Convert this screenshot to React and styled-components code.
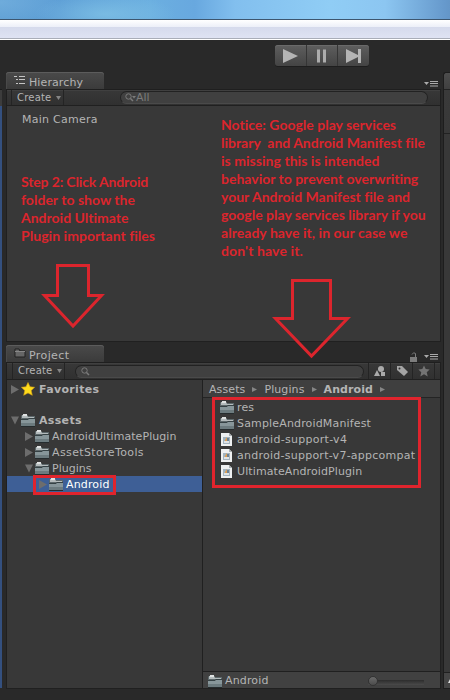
import React from "react";
import styled, { createGlobalStyle } from "styled-components";

const Global = createGlobalStyle`
  *{box-sizing:border-box}
  body{margin:0;background:#292929;overflow:hidden}
`;
const ui = `"DejaVu Sans", Verdana, sans-serif`;

const Page = styled.div`
  position:relative;width:450px;height:700px;overflow:hidden;display:flex;flex-direction:column;
  background:#292929;color:#b4b4b4;font:11px/16px ${ui};
`;
const Sky = styled.div`
  height:19px;flex:none;
  background:
    radial-gradient(ellipse 60px 24px at 0 2px, rgba(140,195,235,.35), transparent),
    radial-gradient(ellipse 70px 20px at 105px 14px, rgba(135,200,232,.6), transparent),
    linear-gradient(90deg,#5f9fd3 0,#5e9fd6 60px,#6bafe0 150px,#68a8df 195px,#82bfee 235px,#90cdf5 330px,#8cc6f1 385px,#6699cc 445px,#6496c8 450px);
`;
const Frame = styled.div`
  height:21px;flex:none;border-top:1px solid #3d566f;border-bottom:1px solid #fff;
  background:linear-gradient(#fff 0,#eceff8 7px,#d5daec 7px,#dfe3f3 18px,#a9adb8 18px);
`;
const Toolbar = styled.div`
  height:32px;flex:none;padding:5px 0 0 275px;
`;
const PlayGroup = styled.div`
  display:flex;width:94px;height:21px;border-radius:3px;overflow:hidden;
  background:linear-gradient(#5e5e5e,#444);box-shadow:inset 0 1px #6a6a6a,0 1px #1e1e1e;
`;
const PlayButton = styled.div`
  flex:1;display:flex;align-items:center;justify-content:center;
  & + &{border-left:1px solid #353535}
`;
const Workspace = styled.div`
  flex:1;min-height:0;display:flex;
`;
const LeftEdge = styled.div`
  width:2px;flex:none;margin:17px 4px 12px 0;background:linear-gradient(#3c3c3c 16px,#34507f 16px);
  border-top:1px solid #1c1c1c;
`;
const Column = styled.div`
  width:435px;flex:none;display:flex;flex-direction:column;gap:3px;
`;
const RightEdge = styled.div`
  flex:1;margin:0 0 11px 2px;border:1px solid #1d1d1d;border-right:0;border-radius:3px 0 0 0;
  background:linear-gradient(#4d4d4d 0,#404040 16px,#222 16px,#222 17px,#3a3a3a 17px,#383838 60px,#222 60px,#222 61px,#383838 61px);
  display:flex;flex-direction:column;justify-content:flex-end;
`;
const EdgeHeader = styled.div`
  height:16px;border-top:1px solid #202020;background:#454545;
  display:flex;justify-content:flex-end;align-items:center;
`;
const Panel = styled.section`
  height:${p => p.$height}px;flex:none;display:flex;flex-direction:column;
`;
const TabBar = styled.div`
  height:17px;flex:none;display:flex;justify-content:space-between;align-items:flex-end;
`;
const Tab = styled.div`
  width:98px;height:17px;padding:3px 0 0 8px;display:flex;gap:3px;border-radius:3px 3px 0 0;line-height:15px;
  background:linear-gradient(#4a4a4a,#3b3b3b);box-shadow:inset 0 1px #5c5c5c,inset 1px 0 #494949;
`;
const TabTools = styled.div`
  display:flex;align-items:center;gap:6px;height:10px;padding-right:3px;
`;
const Controls = styled.div`
  height:${p => p.$height}px;flex:none;display:flex;align-items:center;border:1px solid #1f1f1f;
  border-bottom-color:#202020;background:linear-gradient(#383838,#303030);box-shadow:inset 0 1px #404040;
  padding-left:${p => p.$indent}px;
`;
const Create = styled.div`
  width:53px;height:100%;display:flex;align-items:center;gap:5px;padding-left:5px;font-size:10px;letter-spacing:.2px;
  border:solid #242424;border-width:0 1px;
`;
const Search = styled.div`
  height:13px;width:${p => p.$width}px;margin-left:${p => p.$offset}px;border-radius:7px;
  border:1px solid #222;border-bottom-color:#4a4a4a;background:#404040;color:#7b7b7b;
  display:flex;align-items:center;padding-left:${p => p.$pad}px;
`;
const Filter = styled.div`
  width:22px;height:100%;border-left:1px solid #242424;display:flex;align-items:center;justify-content:center;
`;
const FilterGroup = styled.div`
  display:flex;height:100%;margin-left:4px;border-right:1px solid #242424;
`;
const Body = styled.div`
  flex:1;min-height:0;background:#383838;border:solid #202020;border-width:0 1px 1px;display:flex;
`;
const HierarchyItem = styled.div`
  padding:6px 0 0 15px;letter-spacing:.25px;
`;
const Tree = styled.div`
  width:196px;flex:none;border-right:1px solid #202020;padding-top:1px;
`;
const Row = styled.div`
  height:16px;display:flex;align-items:center;padding-left:${p => p.$indent}px;
  font-weight:${p => p.$bold ? 700 : 400};
  margin-bottom:${p => p.$gap || 0}px;
  color:${p => p.$selected ? "#fff" : "#b4b4b4"};
  background:${p => p.$selected ? "#3e5f96" : "transparent"};
`;
const Label = styled.span`
  white-space:pre;letter-spacing:${p => p.$spacing || 0}px;margin-left:${p => p.$left ?? 4}px;
  ${Row} &{line-height:18px;padding-top:1px}
`;
const Files = styled.div`
  flex:1;display:flex;flex-direction:column;
`;
const Crumbs = styled.div`
  height:18px;flex:none;display:flex;align-items:center;gap:7px;padding:2px 0 0 6px;
  background:#3f3f3f;border-bottom:1px solid #242424;letter-spacing:.1px;
`;
const FileList = styled.div`flex:1;padding-top:1px;`;
const Status = styled.div`
  height:17px;flex:none;display:flex;align-items:center;padding:2px 0 0 5px;background:#414141;border-top:1px solid #202020;
`;
const Slider = styled.div`
  width:56px;height:10px;margin-left:99px;display:flex;align-items:center;
  background:linear-gradient(#2d2d2d,#4a4a4a) 0 4px/56px 5px no-repeat;
`;
const Knob = styled.div`
  width:10px;height:10px;border-radius:50%;background:linear-gradient(#6a6a6a,#4c4c4c);border:1px solid #333;
`;
const Overlay = styled.div`position:absolute;inset:0;pointer-events:none;`;
const Note = styled.div`
  position:absolute;left:${p => p.$x}px;top:${p => p.$y}px;white-space:pre;
  font:700 14px/18px Lato, sans-serif;color:#dc252d;font-variant-ligatures:none;
`;
const NoteLine = styled.div`letter-spacing:${p => p.$spacing}px;`;
const Arrow = styled.svg`position:absolute;left:${p => p.$x}px;top:${p => p.$y}px;`;
const Highlight = styled.div`
  position:absolute;left:${p => p.$x}px;top:${p => p.$y}px;width:${p => p.$w}px;height:${p => p.$h}px;border:3px solid #e0242d;
`;
const FoldSlot = styled.span`
  width:10px;flex:none;display:flex;
`;

const Folder = () => (
  <svg width="14" height="13" viewBox="0 0 14 13">
    <path d="M0 12V2L1 1H6L7 2H14V12Z" fill="#5d686b" />
    <path d="M1 1H6L7 3H13V4H1Z" fill="#b4bbbc" />
    <path d="M2 0H6V2H2Z" fill="#dfe2e2" />
    <path d="M0 5H7L8 4H14V5H8L7 6H0Z" fill="#354144" />
    <path d="M0 6H7L8 5H14V9H0Z" fill="#87969a" />
    <path d="M0 9H14V12H0Z" fill="#6c7b7f" />
    <path d="M0 12H14V13H0Z" fill="#252c2e" />
  </svg>
);
const FileIcon = () => (
  <svg width="14" height="13" viewBox="0 0 14 13">
    <path d="M1 0H9L12 3V13H1Z" fill="#eef0f1" />
    <path d="M9 0V3H12" fill="#a9afb2" />
    <path d="M3 4H10V11H3Z" fill="#a3b4c0" />
    <path d="M4 8H9V10H4Z" fill="#e1e4e5" />
    <path d="M5 7L7 4V8H5Z" fill="#df9f51" /><path d="M7 5H9V8H7Z" fill="#6d8294" />
  </svg>
);
const Fold = ({ open }) => (
  <FoldSlot>
    <svg width="8" height="9" viewBox="0 0 8 9">
      <path d={open ? "M0 .5H8L4 8.5Z" : "M0 0L8 4.5L0 9Z"} fill="#6d6d6d" />
    </svg>
  </FoldSlot>
);
const Down = () => <svg width="5" height="4"><path d="M0 0H5L2.5 4Z" fill="#858585" /></svg>;
const Menu = () => (
  <svg width="14" height="6"><path d="M0 1H5L2.5 4Z" fill="#aaa" /><path d="M6 .5H14M6 2.5H14M6 5H14" stroke="#aaa" /></svg>
);
const Lens = ({ menu }) => (
  <svg width="11" height="9" viewBox="0 0 11 9" fill="none" stroke="#7b7b7b">
    <circle cx="3.5" cy="3.5" r="2.7" /><path d="M5.5 5.5L8 8" strokeWidth="1.5" />
    {menu && <path d="M7 3H11L9 5.5Z" fill="#7b7b7b" stroke="none" />}
  </svg>
);
const Star = ({ size, color, edge }) => (
  <svg width={size} height={size} viewBox="0 0 14 14">
    <path d="M7 .5L9 4.8L13.6 5.3L10.2 8.6L11.3 13.3L7 10.9L2.7 13.3L3.8 8.6L.4 5.3L5 4.8Z" fill={color} stroke={edge} strokeWidth=".6" />
  </svg>
);
const CrumbArrow = () => <svg width="5" height="7"><path d="M0 1L5 3.5L0 6Z" fill="#858585" /></svg>;

const firstNote = [
  ["Step 2: Click Android", -0.14], ["folder to show the", 0.02], ["Android Ultimate", 0], ["Plugin important files", 0.04],
];
const secondNote = [
  ["Notice: Google play services", 0], ["library  and Android Manifest file", 0], ["is missing this is intended", 0.04],
  ["behavior to prevent overwriting", 0], ["your Android Manifest file and", 0],
  ["google play services library if you", 0], ["already have it, in our case we", 0.04], ["don't have it.", 0.13],
];
const files = [
  [Folder, "res", 0.1], [Folder, "SampleAndroidManifest", 0.16], [FileIcon, "android-support-v4", 0.28],
  [FileIcon, "android-support-v7-appcompat", 0.25], [FileIcon, "UltimateAndroidPlugin", 0.1],
];

export default function App() {
  return (
    <Page>
      <Global />
      <Sky />
      <Frame />
      <Toolbar>
        <PlayGroup>
          <PlayButton><svg width="15" height="14"><path d="M0 0L15 7L0 14Z" fill="#b4b4b4" /></svg></PlayButton>
          <PlayButton><svg width="10" height="14"><path d="M0 .5H3V13.5H0ZM6 .5H9V13.5H6Z" fill="#acacac" /></svg></PlayButton>
          <PlayButton><svg width="16" height="14"><path d="M0 0L12 6V0H15V14H12V8L0 14Z" fill="#b4b4b4" /></svg></PlayButton>
        </PlayGroup>
      </Toolbar>
      <Workspace>
        <LeftEdge />
        <Column>
          <Panel $height={270}>
            <TabBar>
              <Tab>
                <svg width="12" height="10"><path d="M0 1.5H3M2 4.5H4M2 8.5H4M5 1.5H11M5 4.5H11M5 8.5H11" stroke="#c5c5c5" /></svg>
                <Label $left={0} $spacing={0.1}>Hierarchy</Label>
              </Tab>
              <TabTools><Menu /></TabTools>
            </TabBar>
            <Controls $indent={4} $height={17}>
              <Create>Create <Down /></Create>
              <Search $offset={56} $width={308} $pad={4}><Lens menu />All</Search>
            </Controls>
            <Body><HierarchyItem>Main Camera</HierarchyItem></Body>
          </Panel>
          <Panel $height={344}>
            <TabBar>
              <Tab>
                <svg width="12" height="11"><path d="M1 3V1H5L6 3H11V9H1Z" fill="#666" stroke="#202020" /><path d="M1 3.5H11" stroke="#888" /></svg>
                <Label $left={0} $spacing={0.4}>Project</Label>
              </Tab>
              <TabTools>
                <svg width="8" height="10"><path d="M0 5H7V10H0Z" fill="#7d7d7d" /><path d="M2 2.5Q3.5-.5 5.5 1.5V5" stroke="#7d7d7d" fill="none" /></svg>
                <Menu />
              </TabTools>
            </TabBar>
            <Controls $indent={5} $height={18}>
              <Create>Create <Down /></Create>
              <Search $offset={10} $width={289} $pad={5}><Lens /></Search>
              <FilterGroup>
                <Filter><svg width="12" height="11"><circle cx="7" cy="3" r="3" fill="#aaa" /><path d="M0 10L3 4L6 10ZM7 6H11V10H7Z" fill="#aaa" /></svg></Filter>
                <Filter><svg width="12" height="12"><path d="M1 1H6L12 7L8 11L1 5Z" fill="#a5a5a5" /><circle cx="3.5" cy="3.5" r="1" fill="#333" /></svg></Filter>
                <Filter><Star size={12} color="#747474" /></Filter>
              </FilterGroup>
            </Controls>
            <Body>
              <Tree>
                <Row $indent={4} $bold $gap={15}><Fold /><Star size={14} color="#ffdc1c" edge="#d9a514" /><Label $spacing={0.33}>Favorites</Label></Row>
                <Row $indent={4} $bold><Fold open /><Folder /><Label $spacing={0.33}>Assets</Label></Row>
                <Row $indent={18}><Fold /><Folder /><Label $left={3} $spacing={0.06}>AndroidUltimatePlugin</Label></Row>
                <Row $indent={18}><Fold /><Folder /><Label $left={3} $spacing={0.38}>AssetStoreTools</Label></Row>
                <Row $indent={18}><Fold open /><Folder /><Label $left={3}>Plugins</Label></Row>
                <Row $indent={32} $selected><Fold /><Folder /><Label $left={3} $spacing={0.15}>Android</Label></Row>
              </Tree>
              <Files>
                <Crumbs><span>Assets</span><CrumbArrow /><span>Plugins</span><CrumbArrow /><b>Android</b><CrumbArrow /></Crumbs>
                <FileList>
                  {files.map(([Icon, name, spacing]) => (
                    <Row key={name} $indent={17}><Icon /><Label $left={3} $spacing={spacing}>{name}</Label></Row>
                  ))}
                </FileList>
                <Status><Folder /><Label $left={3} $spacing={0.15}>Android</Label><Slider><Knob /></Slider></Status>
              </Files>
            </Body>
          </Panel>
        </Column>
        <RightEdge>
          <EdgeHeader><svg width="2" height="5"><path d="M0 5L2 1V5Z" fill="#ddd" /></svg></EdgeHeader>
        </RightEdge>
      </Workspace>
      <Overlay>
        <Note $x={21} $y={173}>{firstNote.map(([t, s]) => <NoteLine key={t} $spacing={s}>{t}</NoteLine>)}</Note>
        <Note $x={221} $y={116}>{secondNote.map(([t, s]) => <NoteLine key={t} $spacing={s}>{t}</NoteLine>)}</Note>
        <Arrow $x={40} $y={263} width="66" height="66"><path d="M17.5 2.5H48.5V32.5H61.5L33 63L4.5 32.5H17.5Z" fill="none" stroke="#dc252d" strokeWidth="3" /></Arrow>
        <Arrow $x={270} $y={277} width="84" height="84"><path d="M22.5 3.5H60.5V41.5H77.5L41.5 79L5.5 41.5H22.5Z" fill="none" stroke="#dc252d" strokeWidth="3" /></Arrow>
        <Highlight $x={212} $y={397} $w={209} $h={91} />
        <Highlight $x={33} $y={475} $w={83} $h={20} />
      </Overlay>
    </Page>
  );
}
